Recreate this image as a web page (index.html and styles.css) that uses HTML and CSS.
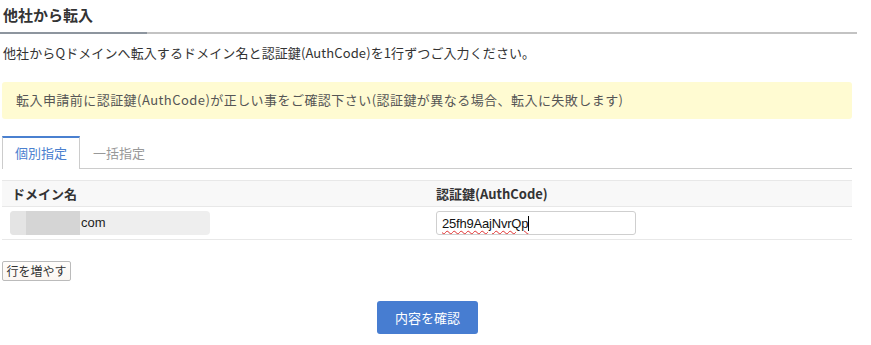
FILE: index.html
```html
<!DOCTYPE html>
<html>
<head>
    <meta charset="utf-8" />
    <title>他社から転入</title>
    <link rel="stylesheet" href="styles.css">
</head>
<body>
    <div class="page">
        <h2 class="pageTitle"><span>他社から転入</span></h2>
        <p class="lead">他社からQドメインへ転入するドメイン名と認証鍵(AuthCode)を1行ずつご入力ください。</p>

        <div class="notice">転入申請前に認証鍵(AuthCode)が正しい事をご確認下さい(認証鍵が異なる場合、転入に失敗します)</div>

        <ul class="tabs">
            <li class="active">個別指定</li>
            <li>一括指定</li>
        </ul>

        <table class="domainTable">
            <tr>
                <th>ドメイン名</th>
                <th>認証鍵(AuthCode)</th>
            </tr>
            <tr>
                <td>
                    <div class="domainName"><span class="mask1"></span><span class="mask2"></span>com</div>
                </td>
                <td>
                    <div class="codeInput"><span class="typed">25fh9AajNvrQp</span><span class="caret"></span></div>
                </td>
            </tr>
        </table>

        <button class="btnAdd" type="button">行を増やす</button>

        <div class="submitArea">
            <button class="btnSubmit" type="button">内容を確認</button>
        </div>
    </div>
</body>
</html>
```

FILE: styles.css
```css
body{
    margin:0;
    font-family:"Noto Sans CJK JP", "Liberation Sans", sans-serif;
    font-size:13px;
    color:#333;
    background:#fff;
}

.page{
    width:857px;
}

.pageTitle{
    margin:0;
    padding:4px 0 6px 3px;
    font-size:15px;
    line-height:22px;
    font-weight:bold;
    color:#333;
    border-bottom:2px solid #c3c3c3;
    position:relative;
}
    .pageTitle:after{
        content:"";
        position:absolute;
        left:0;
        bottom:-2px;
        width:147px;
        height:2px;
        background-color:#8d959e;
    }

.lead{
    margin:10px 0 0 3px;
    line-height:18px;
    letter-spacing:0.1px;
}

.notice{
    margin:20px 5px 0 2px;
    padding:9px 14px 10px;
    background-color:#fffbd2;
    border-radius:3px;
    color:#555;
    line-height:18px;
    letter-spacing:0.45px;
}

.tabs{
    list-style:none;
    margin:17px 5px 0 2px;
    padding:0;
    display:flex;
    border-bottom:1px solid #cccccc;
    height:32px;
}
    .tabs li{
        padding:0 12px 0 13px;
        line-height:30px;
        color:#999;
        border-top:2px solid transparent;
    }
    .tabs li.active{
        color:#4a80cf;
        border-top:2px solid #4a80d0;
        border-left:1px solid #ccc;
        border-right:1px solid #ccc;
        background:#fff;
        height:31px;
        margin-bottom:-1px;
        padding:0 12px;
    }

.domainTable{
    margin:11px 5px 0 2px;
    width:850px;
    border-collapse:collapse;
    table-layout:fixed;
}
    .domainTable th{
        text-align:left;
        font-weight:bold;
        background-color:#f8f8f8;
        border-top:1px solid #e8e8e8;
        border-bottom:1px solid #e8e8e8;
        height:25px;
        padding:0 10px;
        line-height:24px;
    }
    .domainTable th + th,
    .domainTable td + td{
        padding-left:9px;
    }
    .domainTable td{
        border-bottom:1px solid #e8e8e8;
        height:32px;
        padding:0 8px;
    }

.domainName{
    width:200px;
    height:24px;
    line-height:24px;
    background-color:#eeeeee;
    border-radius:4px;
    display:flex;
    align-items:center;
    font-family:"Liberation Sans", sans-serif;
    font-size:13px;
    color:#222;
    overflow:hidden;
}
    .mask1{
        width:16px;
        height:24px;
        background-color:#e4e4e4;
    }
    .mask2{
        width:54px;
        height:24px;
        background-color:#d5d5d5;
        margin-right:1px;
    }

.codeInput{
    width:188px;
    height:22px;
    border:1px solid #cfcfcf;
    border-radius:3px;
    padding:0 5px;
    display:flex;
    align-items:center;
    font-family:"Liberation Sans", sans-serif;
    font-size:13px;
    color:#111;
    margin-left:0;
}
    .typed{
        text-decoration:underline wavy #e03030;
        text-decoration-thickness:1px;
        text-underline-offset:2px;
        letter-spacing:-0.2px;
    }
    .caret{
        width:1px;
        height:15px;
        background:#000;
    }

.btnAdd{
    margin:21px 0 0 2px;
    height:20px;
    width:69px;
    padding:0;
    font-family:"Noto Sans CJK JP", sans-serif;
    font-size:12px;
    line-height:18px;
    color:#333;
    background:linear-gradient(#fffdfb, #fbf6f2);
    border:1px solid #bbb;
    border-radius:2px;
    display:block;
}

.submitArea{
    display:flex;
    justify-content:center;
    margin-top:20px;
    padding-right:2px;
}

.btnSubmit{
    width:101px;
    height:33px;
    border:none;
    border-radius:3px;
    background-color:#477dd1;
    color:#fff;
    font-family:"Noto Sans CJK JP", sans-serif;
    font-size:13px;
}
```
